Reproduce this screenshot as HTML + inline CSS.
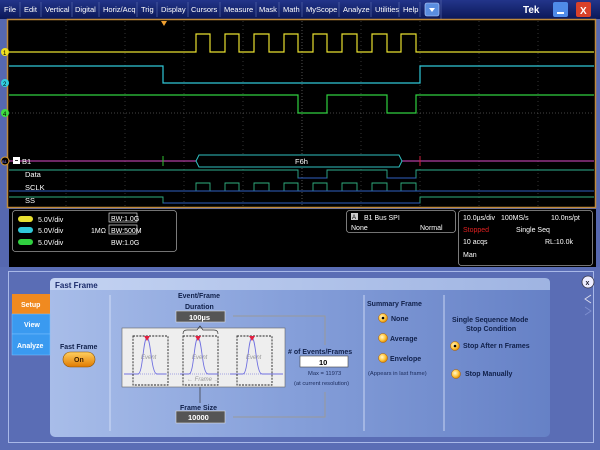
<!DOCTYPE html>
<html><head><meta charset="utf-8"><style>
html,body{margin:0;padding:0;width:600px;height:450px;overflow:hidden;background:#5668b0}
svg{display:block}
text{font-family:"Liberation Sans",sans-serif}
</style></head><body>
<svg width="600" height="450" viewBox="0 0 600 450" xmlns="http://www.w3.org/2000/svg">
<defs>
<linearGradient id="mb" x1="0" y1="0" x2="0" y2="1"><stop offset="0" stop-color="#23358a"/><stop offset="1" stop-color="#0b1858"/></linearGradient>
<linearGradient id="pn" x1="0" y1="0" x2="1" y2="0"><stop offset="0" stop-color="#a8bde9"/><stop offset="0.5" stop-color="#849ed9"/><stop offset="1" stop-color="#6681c6"/></linearGradient>
<linearGradient id="tb" x1="0" y1="0" x2="1" y2="0"><stop offset="0" stop-color="#c4d3f2"/><stop offset="1" stop-color="#9fb4e2"/></linearGradient>
<radialGradient id="rb" cx="0.4" cy="0.4" r="0.6"><stop offset="0" stop-color="#fff6d0"/><stop offset="0.6" stop-color="#ffc840"/><stop offset="1" stop-color="#e08a00"/></radialGradient>
<linearGradient id="on" x1="0" y1="0" x2="0" y2="1"><stop offset="0" stop-color="#ffd060"/><stop offset="1" stop-color="#e07a00"/></linearGradient>
</defs>
<rect x="0" y="0" width="600" height="19" fill="url(#mb)"/>
<g font-size="7.5" fill="#fff">
<text x="4" y="12">File</text><text x="24" y="12">Edit</text><text x="45" y="12">Vertical</text><text x="75" y="12">Digital</text><text x="103" y="12">Horiz/Acq</text><text x="141" y="12">Trig</text><text x="161" y="12">Display</text><text x="191" y="12">Cursors</text><text x="224" y="12">Measure</text><text x="259" y="12">Mask</text><text x="283" y="12">Math</text><text x="306" y="12">MyScope</text><text x="343" y="12">Analyze</text><text x="375" y="12">Utilities</text><text x="403" y="12">Help</text>
</g>
<g stroke="#5566aa" stroke-width="0.7">
<line x1="20" y1="2" x2="20" y2="17"/><line x1="41" y1="2" x2="41" y2="17"/><line x1="72" y1="2" x2="72" y2="17"/><line x1="99" y1="2" x2="99" y2="17"/><line x1="137" y1="2" x2="137" y2="17"/><line x1="157" y1="2" x2="157" y2="17"/><line x1="188" y1="2" x2="188" y2="17"/><line x1="220" y1="2" x2="220" y2="17"/><line x1="256" y1="2" x2="256" y2="17"/><line x1="279" y1="2" x2="279" y2="17"/><line x1="302" y1="2" x2="302" y2="17"/><line x1="339" y1="2" x2="339" y2="17"/><line x1="371" y1="2" x2="371" y2="17"/><line x1="399" y1="2" x2="399" y2="17"/><line x1="420" y1="2" x2="420" y2="17"/><line x1="441" y1="0" x2="441" y2="19"/>
</g>
<rect x="425" y="3" width="14" height="13" rx="2" fill="#5a8de0" stroke="#c0d4ff" stroke-width="0.6"/>
<path d="M429 8 L435 8 L432 12 Z" fill="#fff"/>
<text x="523" y="13" font-size="10" font-weight="bold" fill="#fff">Tek</text>
<rect x="553" y="2" width="15" height="15" rx="2" fill="#4f8be8"/><rect x="557" y="12" width="7" height="2" fill="#fff"/>
<rect x="576" y="2" width="15" height="15" rx="2" fill="#d8412a"/><text x="580" y="14" font-size="10" font-weight="bold" fill="#fff">X</text>
<rect x="7.5" y="19.5" width="588" height="188" fill="#000" stroke="#c08a3a" stroke-width="1.5"/>
<g stroke="#555" stroke-width="0.6" stroke-dasharray="1,3">
<line x1="66" y1="21" x2="66" y2="206"/><line x1="125" y1="21" x2="125" y2="206"/><line x1="184" y1="21" x2="184" y2="206"/><line x1="243" y1="21" x2="243" y2="206"/><line x1="361" y1="21" x2="361" y2="206"/><line x1="420" y1="21" x2="420" y2="206"/><line x1="479" y1="21" x2="479" y2="206"/><line x1="538" y1="21" x2="538" y2="206"/>
</g>
<g stroke="#888" stroke-width="0.6" stroke-dasharray="1,2">
<line x1="302" y1="21" x2="302" y2="206"/><line x1="9" y1="113" x2="594" y2="113"/>
</g>
<path d="M161 21 L167 21 L164 26 Z" fill="#f0a030"/>
<path d="M9 52 H196 V34 H210 V52 H225 V34 H239 V52 H254 V34 H269 V52 H284 V34 H298 V52 H313 V34 H327 V52 H342 V34 H357 V52 H372 V34 H387 V52 H401 V34 H416 V52 H594" fill="none" stroke="#e8e030" stroke-width="1.2"/>
<path d="M9 66 H163 V83 H420 V66 H594" fill="none" stroke="#30c8d8" stroke-width="1.2"/>
<path d="M9 95 H298 V113 H327 V95 H387 V113 H416 V95 H594" fill="none" stroke="#30d040" stroke-width="1.2"/>
<circle cx="5" cy="52" r="4" fill="#f0e020"/><text x="3" y="55" font-size="6" fill="#000">1</text>
<circle cx="5" cy="83" r="4" fill="#30d0e0"/><text x="3" y="86" font-size="6" fill="#000">2</text>
<circle cx="5" cy="113" r="4" fill="#40e040"/><text x="3" y="116" font-size="6" fill="#000">4</text>
<line x1="9" y1="161" x2="594" y2="161" stroke="#b03ca0" stroke-width="1.2"/>
<line x1="163" y1="156" x2="163" y2="166" stroke="#30c030"/>
<line x1="420" y1="156" x2="420" y2="166" stroke="#d02040"/>
<path d="M199 155 H399 L402 161 L399 167 H199 L196 161 Z" fill="#000" stroke="#30c0c0" stroke-width="1"/>
<text x="295" y="164" font-size="7.5" fill="#fff">F6h</text>
<circle cx="5" cy="161" r="4" fill="#000" stroke="#e0a030" stroke-width="1"/><text x="2" y="163" font-size="4" fill="#88f">B1</text>
<rect x="13" y="157" width="7" height="7" fill="#fff"/><rect x="15" y="160" width="3" height="1" fill="#333"/>
<text x="22" y="164" font-size="7.5" fill="#fff">B1</text>
<path d="M9 170 H298 V178 H327 V170 H387 V178 H416 V170 H594" fill="none" stroke="#30b090" stroke-width="0.9"/>
<path d="M298 178 H327 M387 178 H416" stroke="#3060c0" stroke-width="0.9"/>
<text x="25" y="177" font-size="7.5" fill="#fff">Data</text>
<path d="M9 191 H196 V183 H210 V191 H225 V183 H239 V191 H254 V183 H269 V191 H284 V183 H298 V191 H313 V183 H327 V191 H342 V183 H357 V191 H372 V183 H387 V191 H401 V183 H416 V191 H594" fill="none" stroke="#30b080" stroke-width="0.9"/>
<line x1="9" y1="191" x2="594" y2="191" stroke="#3060c0" stroke-width="0.9"/>
<text x="25" y="190" font-size="7.5" fill="#fff">SCLK</text>
<path d="M9 197 H163 V203 H420 V197 H594" fill="none" stroke="#30b080" stroke-width="0.9"/>
<line x1="163" y1="203" x2="420" y2="203" stroke="#3060c0" stroke-width="0.9"/>
<text x="25" y="203" font-size="7.5" fill="#fff">SS</text>
<rect x="9" y="209" width="587" height="58" fill="#000"/>
<rect x="12.5" y="210.5" width="164" height="41" rx="3" fill="none" stroke="#999" stroke-width="0.8"/>
<g font-size="7" fill="#fff">
<rect x="18" y="216" width="15" height="6" rx="3" fill="#e8e030"/><text x="38" y="222">5.0V/div</text>
<rect x="18" y="227" width="15" height="6" rx="3" fill="#30c8d8"/><text x="38" y="233">5.0V/div</text>
<rect x="18" y="239" width="15" height="6" rx="3" fill="#30d040"/><text x="38" y="245">5.0V/div</text>
<rect x="109" y="213" width="28" height="9" fill="#000" stroke="#fff" stroke-width="0.6"/><text x="111" y="221">BW:1.0G</text>
<text x="91" y="233">1MΩ</text>
<rect x="109" y="225" width="28" height="9" fill="#000" stroke="#fff" stroke-width="0.6"/><text x="111" y="233">BW:500M</text>
<text x="111" y="245">BW:1.0G</text>
</g>
<rect x="346.5" y="210.5" width="109" height="22" rx="3" fill="none" stroke="#999" stroke-width="0.8"/>
<g font-size="7" fill="#fff">
<rect x="351" y="213" width="7" height="7" fill="#ccc"/><text x="352" y="219" font-size="6" fill="#000">A</text>
<text x="364" y="220">B1 Bus SPI</text><text x="351" y="230">None</text><text x="420" y="230">Normal</text>
</g>
<rect x="458.5" y="210.5" width="134" height="55" rx="3" fill="none" stroke="#999" stroke-width="0.8"/>
<g font-size="7" fill="#fff">
<text x="463" y="220">10.0µs/div</text><text x="501" y="220">100MS/s</text><text x="551" y="220">10.0ns/pt</text>
<text x="463" y="232" fill="#e02020">Stopped</text><text x="516" y="232">Single Seq</text>
<text x="463" y="244">10 acqs</text><text x="545" y="244">RL:10.0k</text>
<text x="463" y="257">Man</text>
</g>
<rect x="0" y="267" width="600" height="183" fill="#5a6db5"/>
<rect x="8.5" y="271.5" width="585" height="171" fill="#5a6db5" stroke="#a8b8e8" stroke-width="1"/>
<rect x="50" y="278" width="500" height="159" rx="5" fill="url(#pn)"/>
<path d="M50 290 V283 Q50 278 55 278 H545 Q550 278 550 283 V290 Z" fill="url(#tb)"/>
<text x="55" y="288" font-size="8" font-weight="bold" fill="#1a2a6a">Fast Frame</text>
<rect x="12" y="294" width="38" height="20" fill="#f08a20"/><text x="21" y="307" font-size="7" font-weight="bold" fill="#fff">Setup</text>
<rect x="12" y="314" width="38" height="20" fill="#3a9af0" stroke="#7cc0ff" stroke-width="0.5"/><text x="24" y="327" font-size="7" font-weight="bold" fill="#fff">View</text>
<rect x="12" y="334" width="38" height="21" fill="#3a9af0" stroke="#7cc0ff" stroke-width="0.5"/><text x="17" y="348" font-size="7" font-weight="bold" fill="#fff">Analyze</text>
<g stroke="#dde6fa" stroke-width="0.8"><line x1="110" y1="295" x2="110" y2="431"/><line x1="364" y1="295" x2="364" y2="431"/><line x1="444" y1="295" x2="444" y2="431"/></g>
<g font-size="7" font-weight="bold" fill="#10204a">
<text x="60" y="349">Fast Frame</text>
<text x="178" y="298">Event/Frame</text><text x="185" y="309">Duration</text>
<text x="180" y="410">Frame Size</text>
<text x="288" y="354">#  of Events/Frames</text>
<text x="367" y="306">Summary Frame</text>
<text x="391" y="321">None</text><text x="390" y="341">Average</text><text x="390" y="361">Envelope</text>
<text x="452" y="322">Single Sequence Mode</text><text x="466" y="331">Stop Condition</text>
<text x="463" y="348">Stop After n Frames</text><text x="465" y="376">Stop Manually</text>
</g>
<rect x="63" y="352" width="32" height="15" rx="7.5" fill="url(#on)" stroke="#8a5000" stroke-width="0.6"/>
<text x="74" y="362" font-size="7" font-weight="bold" fill="#402000">On</text>
<rect x="176" y="311" width="49" height="11" fill="#555" stroke="#ddd" stroke-width="0.6"/><text x="189" y="320" font-size="7.5" font-weight="bold" fill="#fff">100µs</text>
<rect x="176" y="411" width="49" height="12" fill="#555" stroke="#ddd" stroke-width="0.6"/><text x="188" y="420" font-size="7.5" font-weight="bold" fill="#fff">10000</text>
<path d="M233 316 H325 V345 M233 417 H325 V392" fill="none" stroke="#999" stroke-width="1"/>
<line x1="200" y1="386" x2="200" y2="403" stroke="#333" stroke-width="0.7"/>
<rect x="122" y="328" width="163" height="59" fill="#eeeeee" stroke="#666" stroke-width="0.6"/>
<line x1="124" y1="374" x2="283" y2="374" stroke="#8888dd" stroke-width="0.8" stroke-dasharray="1,1"/>
<g fill="none" stroke="#7070e0" stroke-width="0.9">
<path d="M124 374 H138 C143 374 143 338 147 338 C151 338 151 374 157 374 H166"/>
<path d="M180 374 H189 C194 374 194 338 198 338 C202 338 202 374 208 374 H218"/>
<path d="M230 374 H243 C248 374 248 338 252 338 C256 338 256 374 262 374 H283"/>
</g>
<g fill="none" stroke="#222" stroke-width="0.9" stroke-dasharray="2,1.2">
<rect x="133" y="336" width="35" height="49"/><rect x="183" y="336" width="35" height="49"/><rect x="237" y="336" width="35" height="49"/>
</g>
<path d="M183 334 Q183 330 187 330 H197 L200 326 L203 330 H214 Q218 330 218 334" fill="none" stroke="#333" stroke-width="0.7"/>
<g fill="#e02040"><path d="M144 336 L150 336 L147 341Z"/><path d="M195 336 L201 336 L198 341Z"/><path d="M249 336 L255 336 L252 341Z"/></g>
<g font-size="6" font-style="italic" fill="#999"><text x="141" y="359">Event</text><text x="192" y="359">Event</text><text x="246" y="359">Event</text><text x="187" y="381">← Frame →</text></g>
<rect x="300" y="356" width="48" height="11" fill="#fff" stroke="#444" stroke-width="0.6"/><text x="319" y="365" font-size="7.5" font-weight="bold" fill="#000">10</text>
<g font-size="5.8" fill="#1a2a5a"><text x="308" y="375">Max = 11973</text><text x="294" y="385">(at current resolution)</text><text x="368" y="375">(Appears in last frame)</text></g>
<g stroke="#b06000" stroke-width="0.5">
<circle cx="383" cy="318" r="4.5" fill="url(#rb)"/><circle cx="383" cy="338" r="4.5" fill="url(#rb)"/><circle cx="383" cy="358" r="4.5" fill="url(#rb)"/>
<circle cx="455" cy="346" r="4.5" fill="url(#rb)"/><circle cx="456" cy="374" r="4.5" fill="url(#rb)"/>
</g>
<circle cx="383" cy="318" r="1.3" fill="#000"/><circle cx="455" cy="346" r="1.3" fill="#000"/>
<circle cx="588" cy="282" r="6" fill="#eef" stroke="#334" stroke-width="0.8"/><text x="585.5" y="285" font-size="7" font-weight="bold" fill="#223">x</text>
<path d="M591 295 L585 299 L591 303" fill="none" stroke="#dde" stroke-width="0.9"/>
<path d="M585 307 L591 311 L585 315" fill="none" stroke="#8090d0" stroke-width="0.9"/>
</svg>
</body></html>
